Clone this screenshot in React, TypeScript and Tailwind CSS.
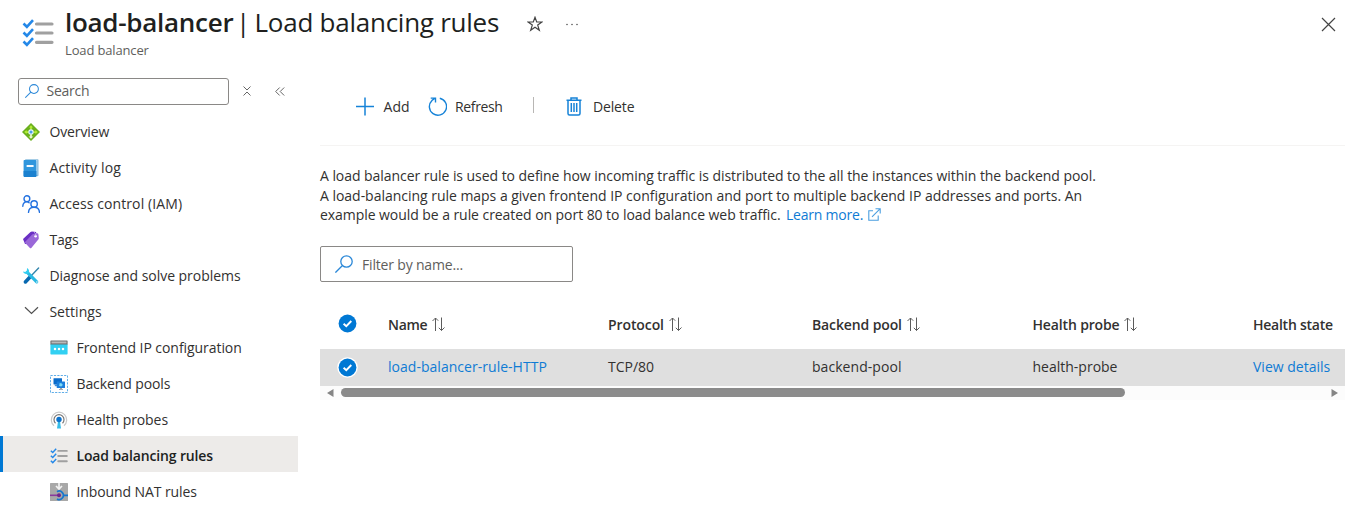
import type { ReactNode } from 'react';

const LoadBalancerIcon = () => (
  <svg width="18" height="18" viewBox="0 0 18 18">
    <path d="M9 0 18 9 9 18 0 9Z" fill="#6bb01d" />
    <path d="M9 2.2 11 4.4H9.9V6.5H8.1V4.4H7ZM2.2 9 4.6 7V8.2H6.6V9.9H4.6V11ZM15.8 9 13.4 7V8.2H11.4V9.9H13.4V11Z" fill="#b4ec36" />
    <path d="M9 15.8 6.6 13.4H8.1V11.6H9.9V13.4H11.4Z" fill="#e9f9d0" />
    <circle cx="9" cy="9" r="2.7" fill="#e6f5fd" />
    <circle cx="9" cy="9" r="1.6" fill="#4a9fe8" />
  </svg>
);

const ActivityIcon = () => (
  <svg width="18" height="18" viewBox="0 0 18 18">
    <rect x="3" y="0.2" width="13.500" height="17" rx="0.9" fill="#83b9dc" />
    <rect x="4" y="0.9" width="11.2" height="15" fill="#d4e9f7" />
    <rect x="1.6" y="0.9" width="12.8" height="17" rx="0.8" fill="#2f96dd" />
    <path d="M1.6 12V17.1a.8.8 0 0 0 .8.8h11.2a.8.8 0 0 0 .8-.8V12Z" fill="#1b81cf" />
    <rect x="4.600" y="6" width="7" height="2.100" rx="0.3" fill="#f4faff" />
  </svg>
);

const PeopleIcon = () => (
  <svg width="18" height="18" viewBox="0 0 18 18" fill="none" stroke="#2472e0" strokeWidth="1.4" strokeLinecap="round">
    <circle cx="4.9" cy="3.7" r="2.9" />
    <path d="M.8 11.2C1 8.4 2.5 6.9 4.8 6.9c.9 0 1.7.3 2.3.8" />
    <circle cx="12.1" cy="8.9" r="3.2" />
    <path d="M6.5 17.4c.2-3.1 2.5-5.1 5.5-5.1s5.300 2 5.500 5.100" />
  </svg>
);

const TagIcon = () => (
  <svg width="18" height="18" viewBox="0 0 18 18">
    <path d="M1 8 8.500 1Q9 .5 10 .5L14 1 15.500 7 8 13 3 13Z" fill="#6a2fc4" />
    <path d="M3.200 10.700 10.200 3.500Q10.700 3 11.400 2.900L15.200 2.300Q16.200 2.300 16.400 3.200L16.800 7.300Q16.800 8 16.300 8.600L9.300 16.900Q8.600 17.600 7.900 16.900L3.200 12Q2.700 11.300 3.200 10.700Z" fill="#9a68d8" />
    <circle cx="13.600" cy="5.200" r="1.300" fill="#fff" />
    <path d="M12 1.200Q14.500 2.500 13.600 5" stroke="#d9c8f3" strokeWidth=".8" fill="none" />
  </svg>
);

const ToolsIcon = () => (
  <svg width="18" height="18" viewBox="0 0 18 18" fill="none">
    <path d="M16.600 1.100 9 9" stroke="#3486ad" strokeWidth="1.400" strokeLinecap="round" />
    <path d="M8.500 9.500 3.400 14.900" stroke="#0868b0" strokeWidth="3.600" strokeLinecap="round" />
    <path d="M5.500 5.700 14.700 14.800" stroke="#29b9e3" strokeWidth="3.200" strokeLinecap="round" />
    <path d="M5 .9A4 4 0 0 1 6.500 6.600 4 4 0 0 1 .9 4.600L3.200 5.100 4.900 3.400Z" fill="#32cdf0" />
    <circle cx="14.900" cy="15" r=".7" fill="#fff" />
  </svg>
);

const ChevronIcon = () => (
  <svg width="18" height="18" viewBox="0 0 18 18" fill="none" stroke="#505050" strokeWidth="1.200">
    <path d="M3 4.200 9.500 10.500 16 4.200" />
  </svg>
);

const FrontendIcon = () => (
  <svg width="18" height="18" viewBox="0 0 18 18">
    <path d="M.4 5H17.600V14.700a.7.7 0 0 1-.7.700H1.100a.7.700 0 0 1-.7-.7Z" fill="#32d0f2" />
    <path d="M1 1.500H17a.6.600 0 0 1 .6.600V5.400H.4V2.100A.6.600 0 0 1 1 1.500Z" fill="#6f6f6f" />
    <rect x="1.500" y="2.500" width="15" height="1.900" fill="#b9b9b9" />
    <circle cx="5" cy="10" r="1.250" fill="#fff" />
    <circle cx="9" cy="10" r="1.250" fill="#fff" />
    <circle cx="13" cy="10" r="1.250" fill="#fff" />
  </svg>
);

const PoolIcon = () => (
  <svg width="18" height="18" viewBox="0 0 18 18">
    <rect x=".5" y=".5" width="17" height="17" fill="none" stroke="#61aee8" strokeWidth="1" strokeDasharray="2.200 1.200" />
    <rect x="3.500" y="3.200" width="8.500" height="6.300" rx=".4" fill="#0b6cca" />
    <rect x="4.800" y="9.500" width="3.500" height="1.700" fill="#3f8ed6" />
    <rect x="6.700" y="6.600" width="8.300" height="6.500" rx=".4" fill="#1c7fdc" />
    <path d="M9.700 8 11.900 8.400 12.800 10 11.300 11.600 9.100 10.900Z" fill="#7ddcf8" />
    <path d="M10.200 13H11.800V14H13V14.800H9V14H10.200Z" fill="#8a8f96" />
  </svg>
);

const ProbeIcon = () => (
  <svg width="18" height="18" viewBox="0 0 18 18" fill="none">
    <path d="M4 14.700A7.700 7.700 0 1 1 14 14.700" stroke="#cacaca" strokeWidth="1.200" />
    <path d="M5.500 12.200A5 5 0 1 1 12.500 12.200" stroke="#777" strokeWidth="1.200" />
    <path d="M8.200 9H9.800L11 17.600H7Z" fill="#39bde8" />
    <circle cx="9" cy="8.500" r="2.700" fill="#0b72cd" />
  </svg>
);

const RulesIcon = ({ size }: { size: number }) => (
  <svg width={size} height={size} viewBox="0 0 32 32" fill="none" strokeLinecap="round">
    <path d="M14.500 7H30M14.500 16H30M14.500 25.300H30" stroke="#a0a0a0" strokeWidth="3.200" />
    <path d="M1.500 6.500 4.900 9.800 11 3.200M1.500 15.500 4.900 18.800 11 12.200M1.500 24.500 4.900 27.800 11 21.200" stroke="#2488e8" strokeWidth="2.600" strokeLinecap="butt" />
  </svg>
);

const NatIcon = () => (
  <svg width="18" height="18" viewBox="0 0 18 18" fill="none">
    <rect width="18" height="18" rx=".5" fill="#a8a8a8" />
    <path d="M9 0V4.500M6 3 9 6 12 3" stroke="#f3f3f3" strokeWidth="1.700" />
    <path d="M0 12.300H8.500" stroke="#893a9c" strokeWidth="1.600" />
    <path d="M7 8.700A4.200 4.200 0 1 1 7 15.900M13.300 12.300H18" stroke="#1577cf" strokeWidth="1.700" />
    <circle cx="9" cy="12.300" r="2" fill="#70288c" />
  </svg>
);

const SearchIcon = ({ size }: { size: number }) => (
  <svg width={size} height={size} viewBox="0 0 18 18" fill="none" stroke="#2b88d8" strokeWidth="1.300" className="shrink-0">
    <circle cx="11.500" cy="6.500" r="5.700" />
    <path d="M7.500 10.500.4 17.600" />
  </svg>
);

const SortIcon = () => (
  <svg width="13" height="15" viewBox="0 0 13 15" fill="none" stroke="#5c5c5c" strokeWidth="1">
    <path d="M3.500 14V1M.5 4 3.500 1 6.200 3.700M9.500 .5V13.500M6.800 10.800 9.500 13.500 12.500 10.500" />
  </svg>
);

const CheckedIcon = ({ ringed }: { ringed?: boolean }) => (
  <svg width="21" height="21" viewBox="0 0 21 21">
    {ringed && <circle cx="10.500" cy="10.500" r="10.300" fill="#fff" />}
    <circle cx="10.500" cy="10.500" r="8.900" fill="#0078d4" />
    <path d="M6.600 10.700 9.300 13.200 14.300 8" fill="none" stroke="#fff" strokeWidth="1.900" />
  </svg>
);

type Item = { icon: ReactNode; label: string; tracking: string; nested?: boolean; selected?: boolean };

const items: Item[] = [
  { icon: <LoadBalancerIcon />, label: 'Overview', tracking: 'tracking-[-0.1px]' },
  { icon: <ActivityIcon />, label: 'Activity log', tracking: 'tracking-[0.15px]' },
  { icon: <PeopleIcon />, label: 'Access control (IAM)', tracking: 'tracking-[0.1px]' },
  { icon: <TagIcon />, label: 'Tags', tracking: 'tracking-[-0.2px]' },
  { icon: <ToolsIcon />, label: 'Diagnose and solve problems', tracking: 'tracking-[-0.04px]' },
  { icon: <ChevronIcon />, label: 'Settings', tracking: 'tracking-[0.05px]' },
  { icon: <FrontendIcon />, label: 'Frontend IP configuration', tracking: 'tracking-[-0.06px]', nested: true },
  { icon: <PoolIcon />, label: 'Backend pools', tracking: 'tracking-[-0.1px]', nested: true },
  { icon: <ProbeIcon />, label: 'Health probes', tracking: 'tracking-[-0.08px]', nested: true },
  { icon: <RulesIcon size={18} />, label: 'Load balancing rules', tracking: 'tracking-[-0.14px]', nested: true, selected: true },
  { icon: <NatIcon />, label: 'Inbound NAT rules', tracking: 'tracking-[-0.1px]', nested: true },
];

function NavItem({ icon, label, tracking, nested, selected }: Item) {
  return (
    <li
      className={`flex h-9 items-center gap-[9px] border-l-[3px] ${nested ? 'pl-[46.500px]' : 'pl-[19.400px]'} ${
        selected ? 'border-[#0078d4] bg-[#edebe9] font-semibold text-[#201f1e]' : 'border-transparent'
      }`}
    >
      <span className="shrink-0 pt-[3px]">{icon}</span>
      <span className={`pt-[3px] whitespace-nowrap ${tracking}`}>{label}</span>
    </li>
  );
}

const columns = [
  { title: 'Name', sortable: true, tracking: 'tracking-[-0.3px]' },
  { title: 'Protocol', sortable: true, tracking: 'tracking-[-0.1px]' },
  { title: 'Backend pool', sortable: true, tracking: 'tracking-[-0.12px]' },
  { title: 'Health probe', sortable: true, tracking: 'tracking-[-0.15px]' },
  { title: 'Health state', sortable: false, tracking: 'tracking-[-0.25px]' },
];

const grid = 'grid grid-cols-[68px_220px_204px_220.500px_220.500px_92px]';

export default function App() {
  return (
    <div className="flex h-[508px] w-[1368px] flex-col overflow-hidden bg-white font-['Open_Sans','Noto_Sans',sans-serif] text-[14px] leading-5 text-[#323130]">
      <header className="flex h-[78px] shrink-0 items-start pl-[22px] pr-[32.500px]">
        <span className="mt-[17px]"><RulesIcon size={32} /></span>
        <div className="ml-[11px] pt-1">
          <h1 className="mb-px flex h-9 items-center text-[26px] leading-9 whitespace-nowrap text-[#201f1e]">
            <span className="w-[171px] font-semibold tracking-[-0.28px]">load-balancer</span>
            <span className="w-[18.500px]">|</span>
            <span className="w-[248px] tracking-[-0.25px]">Load balancing rules</span>
          </h1>
          <p className="text-[13px] leading-[18px] tracking-[-0.15px] text-[#605e5c]">Load balancer</p>
        </div>
        <svg className="mt-4 ml-6" width="16" height="16" viewBox="0 0 16 16" fill="none" stroke="#444" strokeWidth="1.200">
          <path d="M8 1.300 9.700 6H14.900L10.700 9.100 12.300 14.300 8 11.200 3.700 14.300 5.300 9.100 1.100 6H6.300Z" />
        </svg>
        <svg className="mt-[23px] ml-[22px]" width="14" height="3" viewBox="0 0 14 3" fill="#555">
          <circle cx="2" cy="1.500" r=".8" /><circle cx="7" cy="1.500" r=".8" /><circle cx="12" cy="1.500" r=".8" />
        </svg>
        <svg className="mt-[17px] ml-auto" width="15" height="15" viewBox="0 0 15 15" stroke="#444" strokeWidth="1.200">
          <path d="M1 1 14 14M14 1 1 14" />
        </svg>
      </header>

      <div className="flex min-h-0 flex-1">
        <nav className="w-[298px] shrink-0">
          <div className="flex h-[26px] items-center pl-[18px]">
            <div className="flex h-[27px] w-[211px] items-center gap-[7.500px] rounded-[3px] border border-[#8a8886] pl-1.5">
              <SearchIcon size={14} />
              <span className="tracking-[-0.25px] text-[#605e5c]">Search</span>
            </div>
            <svg className="ml-3.5" width="8" height="10" viewBox="0 0 8 10" fill="none" stroke="#666" strokeWidth="1">
              <path d="M.5 .5 4 4 7.500 .5M.5 9.500 4 6 7.500 9.500" />
            </svg>
            <svg className="ml-6" width="10" height="9" viewBox="0 0 10 9" fill="none" stroke="#666" strokeWidth="1">
              <path d="M4.700 .5.700 4.500 4.700 8.500M9.200 .5 5.200 4.500 9.200 8.500" />
            </svg>
          </div>
          <ul className="mt-2">
            {items.map((item) => <NavItem key={item.label} {...item} />)}
          </ul>
        </nav>

        <main className="ml-[22px] w-[1025px]">
          <div className="flex h-[68px] items-start border-b border-[#f5f4f3] pl-9 pt-[17px]">
            <div className="flex w-[72px] items-center gap-[9.500px]">
              <svg width="18" height="19" viewBox="0 0 18 19" stroke="#1683d8" strokeWidth="1.500"><path d="M9 .5V18.500M0 9.500H18" /></svg>
              <span className="pt-0.5 tracking-[0.1px]">Add</span>
            </div>
            <div className="flex w-[105px] items-center gap-2">
              <svg width="19" height="19" viewBox="0 0 19 19" fill="none" stroke="#1683d8" strokeWidth="1.400">
                <path d="M11.800 1.200A8.600 8.600 0 1 1 4 3.400L7.300 1M2.700 1.100H7.500V5.600" />
              </svg>
              <span className="pt-0.5 tracking-[-0.35px]">Refresh</span>
            </div>
            <span className="mt-0.5 h-4 w-px bg-[#b8b6b4]" />
            <div className="ml-8 flex items-center gap-[11px]">
              <svg width="16" height="19" viewBox="0 0 16 19" fill="none" stroke="#1683d8" strokeWidth="1.500">
                <path d="M.5 3.200H15.500M5 3V1H11V3M2 3.500V16.500Q2 18 3.500 18H12.500Q14 18 14 16.500V3.500M5.300 6V15M8 6V15M10.700 6V15" />
              </svg>
              <span className="pt-0.5 tracking-[-0.15px]">Delete</span>
            </div>
          </div>

          <div className="mt-5 whitespace-nowrap">
            <p className="tracking-[-0.05px]">A load balancer rule is used to define how incoming traffic is distributed to the all the instances within the backend pool.</p>
            <p className="tracking-[-0.025px]">A load-balancing rule maps a given frontend IP configuration and port to multiple backend IP addresses and ports. An</p>
            <p className="-mt-px flex items-center">
              <span className="w-[466px] tracking-[-0.06px]">example would be a rule created on port 80 to load balance web traffic.</span>
              <span className="tracking-[-0.22px] text-[#0f7bd4]">Learn more.</span>
              <svg className="-mt-0.5 ml-[5px]" width="13" height="13" viewBox="0 0 13 13" fill="none" stroke="#4b9fe0" strokeWidth="1.100">
                <path d="M5 2.800H.8V12.200H10.200V7.500M4 8.800 12 .8M7.500 .8H12.200V5.500" />
              </svg>
            </p>
          </div>

          <div className="mt-[21px] flex h-9 w-[253px] items-center gap-[9px] rounded-[2px] border border-[#8a8886] pl-3.5">
            <SearchIcon size={18} />
            <span className="pt-px tracking-[-0.18px] text-[#605e5c]">Filter by name...</span>
          </div>

          <section className="mt-[23px]">
            <div className={`${grid} h-[44px] items-center pb-1 font-semibold text-[#323130]`}>
              <span className="-mt-1 pl-[17px]"><CheckedIcon /></span>
              {columns.map((c) => (
                <span key={c.title} className="flex items-center gap-[5px] pb-px whitespace-nowrap">
                  <span className={c.tracking}>{c.title}</span>
                  {c.sortable && <SortIcon />}
                </span>
              ))}
            </div>
            <div className={`${grid} h-[37px] items-center bg-[#dfdfdf] pb-px whitespace-nowrap`}>
              <span className="pl-[17px]"><CheckedIcon ringed /></span>
              <span className="tracking-[0.03px] text-[#0f7bd4]">load-balancer-rule-HTTP</span>
              <span>TCP/80</span>
              <span className="tracking-[0.05px]">backend-pool</span>
              <span>health-probe</span>
              <span className="text-[#0f7bd4]">View details</span>
            </div>
            <div className="flex h-[14px] items-center bg-[#fcfcfc] px-[7px] pb-px">
              <svg width="7" height="8" viewBox="0 0 7 8" fill="#858585"><path d="M6.500 0V8L0 4Z" /></svg>
              <span className="ml-[7px] h-[9px] w-[784px] rounded-full bg-[#8a8a8a]" />
              <svg className="ml-auto" width="7" height="8" viewBox="0 0 7 8" fill="#858585"><path d="M.5 0V8L7 4Z" /></svg>
            </div>
          </section>
        </main>
      </div>
    </div>
  );
}
